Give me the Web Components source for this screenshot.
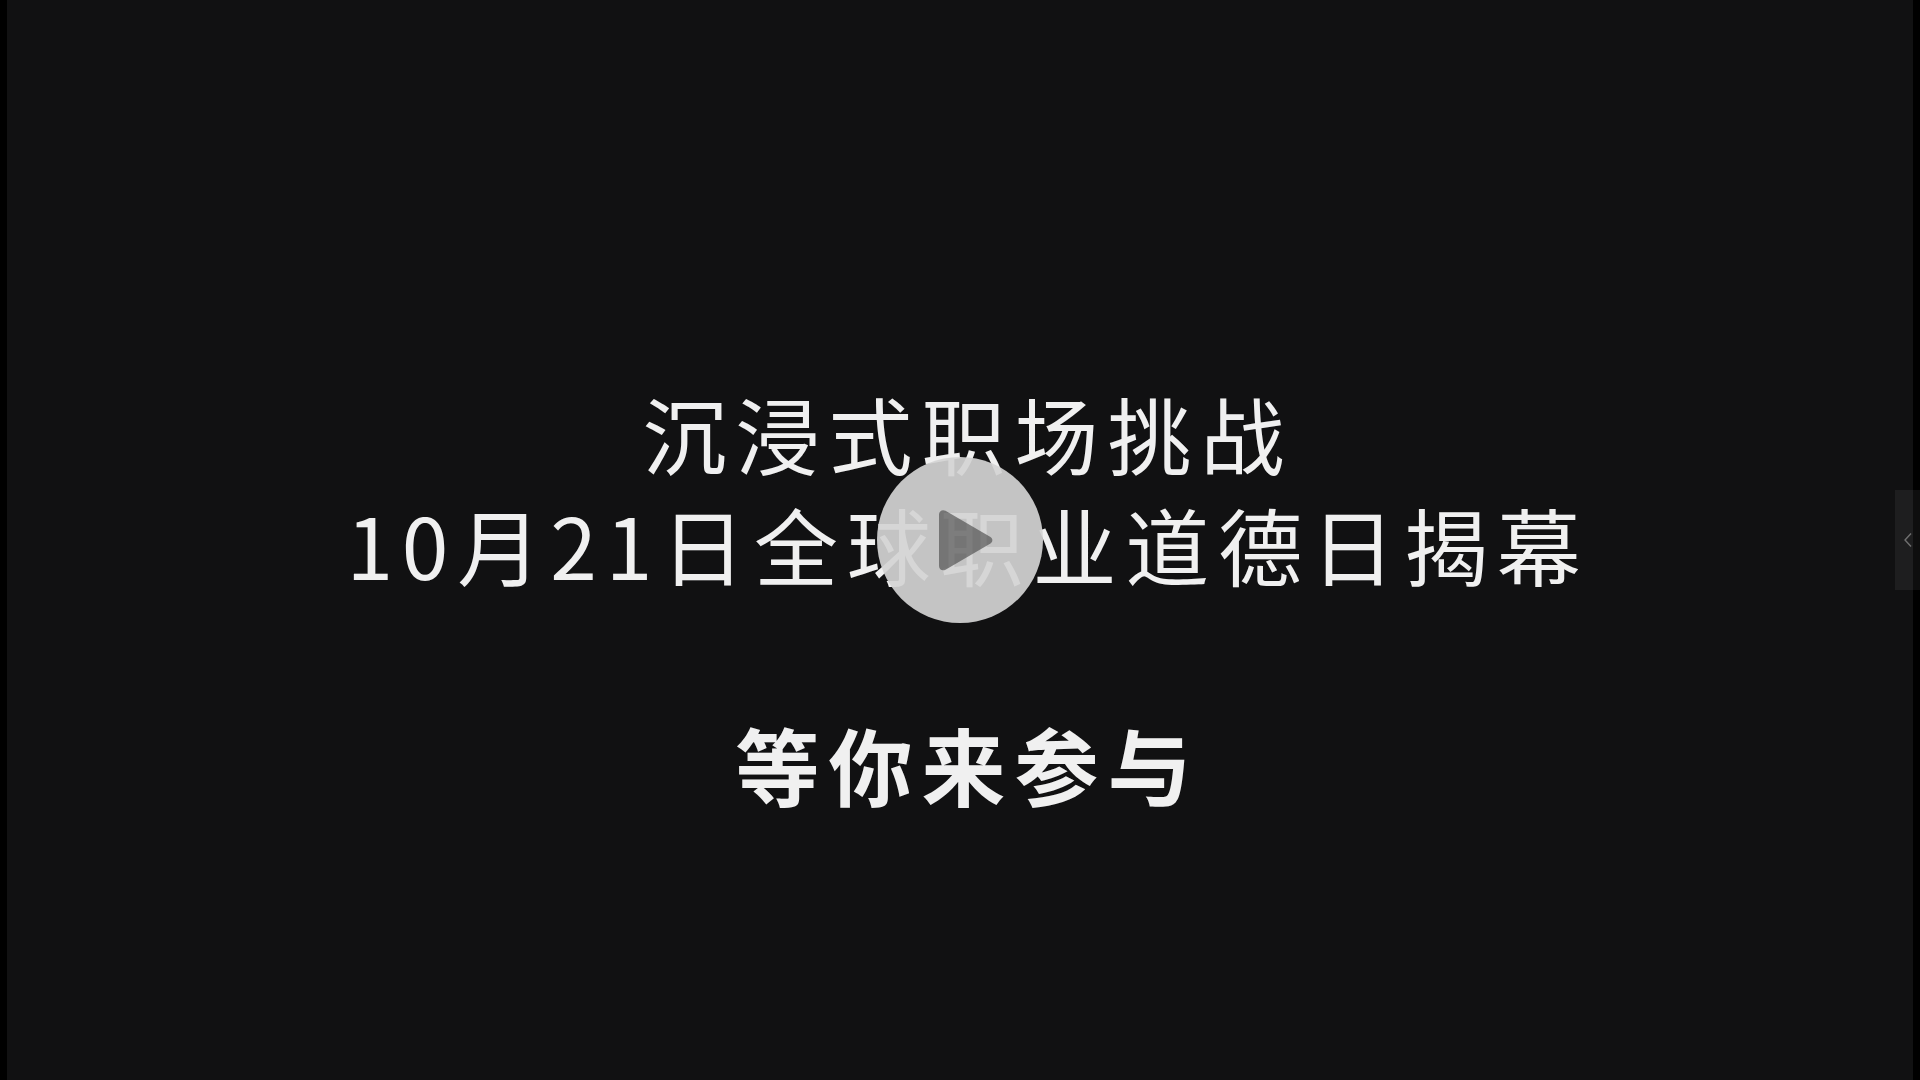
<!DOCTYPE html>
<html lang="zh-CN">
<head>
<meta charset="utf-8">
<title>沉浸式职场挑战</title>
<style>
html,body{margin:0;height:100%;background:#000;overflow:hidden}
</style>
</head>
<body>
<video-stage>
  <video-caption>
    <span>沉浸式职场挑战</span>
    <span class="wide">10月21日全球职业道德日揭幕</span>
    <span class="gap"></span>
    <strong>等你来参与</strong>
  </video-caption>
  <play-button slot="overlay"></play-button>
  <side-tab slot="overlay"></side-tab>
</video-stage>
<script>
function define(name, html){
  customElements.define(name, class extends HTMLElement{
    constructor(){super();this.attachShadow({mode:'open'}).innerHTML=html;}
  });
}
define('video-stage',`<style>
:host{display:flex;position:relative;width:1920px;height:1080px;background:#000;box-sizing:border-box;padding:0 7px;overflow:hidden}
.frame{flex:1;display:flex;align-items:center;justify-content:center;background:#111112;padding-top:116px}
</style><div class="frame"><slot></slot></div><slot name="overlay"></slot>`);
define('video-caption',`<style>
:host{display:flex;flex-direction:column;align-items:center;color:#f0f0f0;font:400 84px/111px "Noto Sans CJK SC","Noto Sans",sans-serif;letter-spacing:9px;filter:blur(.55px);margin-left:16px}
::slotted(span){display:block;min-height:111px;white-space:nowrap;font-weight:400}
::slotted(.wide){letter-spacing:8.85px}
::slotted(strong){display:block;font-weight:700;white-space:nowrap;margin-top:-2px}
</style><slot></slot>`);
define('play-button',`<style>
:host{display:flex;align-items:center;justify-content:center;position:absolute;left:877px;top:457px;width:166px;height:166px;border-radius:50%;background:rgba(212,212,212,.92)}
svg{display:block}
</style><svg width="166" height="166" viewBox="0 0 166 166"><path d="M62 57.5C62 54 65.5 52 68.500 53.800L113.500 80C116 81.500 116 85 113.500 86.500L68.500 112.700C65.500 114.500 62 112.500 62 109Z" fill="rgba(50,50,50,.54)"/></svg>`);
define('side-tab',`<style>
:host{display:flex;align-items:center;justify-content:center;position:absolute;right:0;top:490px;width:25px;height:100px;background:rgba(255,255,255,.055)}
svg{display:block}
</style><svg width="10" height="16" viewBox="0 0 10 16"><path d="M8 1.500L2 8l6 6.500" fill="none" stroke="#707070" stroke-width="1.400"/></svg>`);
</script>
</body>
</html>
